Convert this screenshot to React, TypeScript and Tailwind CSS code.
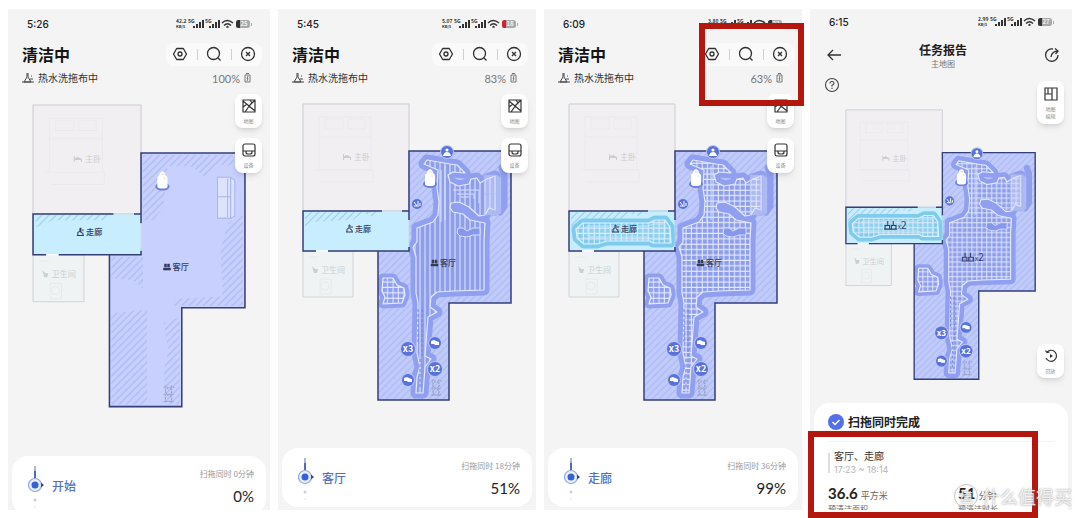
import { ReactNode } from 'react';
import clsx from 'clsx';

type Stage = 'start' | 'vacuum' | 'mop' | 'report';

const LIVING = 'M106 47H208V199H146V296H75V147H106Z';

const MAIN_AREA =
  'M114 124L130 118L135 111L136 98L134 84L135 66L121 60L124 56L147 60L154 61L162 69L150 68L145 71L147 78L155 82L166 80L168 75L174 74L177 79L184 75L192 72V106L186 104L182 111L176 112L166 103L156 98L148 99L147 104L150 108L160 110L167 116L182 119L181 136V186L150 187L134 188L128 193L127 203L134 208L125 213L122 252L128 255L122 263L120 289H113L114 273L117 263L114 249L115 199L113 189V153L110 143L114 138Z';

const SIDE_AREA = 'M80 174L90 174L94 181L101 184L102 191L99 199L80 200L82 193L79 187Z';

const HALL_AREA =
  'M7 125L14 119H80L86 116H96L101 123L102 139H84L81 137H38L28 140H15L8 134Z';

const START_HATCH = [
  'M108 49H197V60L180 58L168 70L155 60H132L128 100L118 113H108Z',
  'M206 108L192 115L184 140L186 188L140 190L134 197H206Z',
  'M77 149H108V180L98 172L77 170Z',
  'M77 204L112 201V294H77Z',
  'M144 208L128 214L133 240L128 262L132 294H144Z',
];

function Badge({ x, y, r = 6, children }: { x: number; y: number; r?: number; children?: ReactNode }) {
  return (
    <g transform={`translate(${x} ${y})`}>
      <circle r={r + 1} fill="#b9c4fa" />
      <circle r={r} fill="#5a73da" />
      {children}
    </g>
  );
}

function PassBadge({ x, y, count }: { x: number; y: number; count: number }) {
  return (
    <Badge x={x} y={y} r={7}>
      <text y="3" fontSize="9" fontWeight="700" fill="#fff" textAnchor="middle">
        x{count}
      </text>
    </Badge>
  );
}

function StainBadge({ x, y }: { x: number; y: number }) {
  return (
    <Badge x={x} y={y}>
      <path d="M-4 -2L-1 -3L1 -2L4 -1L4 2L0 2L-1 1L-4 1Z" fill="#fff" />
    </Badge>
  );
}

function MopCount({ x, y }: { x: number; y: number }) {
  return (
    <g transform={`translate(${x} ${y})`} stroke="#343c6c" fill="none">
      <path d="M3 -5V0M0 4V0H5V4ZM9 -5V0M7 4V0H12V4ZM-1 4H13" strokeWidth="1.2" />
      <text x="14" y="4" fontSize="11" fill="#343c6c" stroke="none">
        <tspan fontSize="7">x</tspan>2
      </text>
    </g>
  );
}

function FloorMap({ stage, className }: { stage: Stage; className: string }) {
  const cleaned = stage !== 'start';
  const mopped = stage === 'mop' || stage === 'report';
  const id = (name: string) => `${stage}-${name}`;
  const url = (name: string) => `url(#${stage}-${name})`;

  return (
    <svg viewBox="-1 -1 211 299" className={clsx('block shrink-0', className)} role="img">
      <defs>
        <pattern id={id('hatch')} width="5" height="5" patternUnits="userSpaceOnUse" patternTransform="rotate(45)">
          <path d="M2.5 0V5" stroke="#adb9f2" strokeWidth="1.2" />
        </pattern>
        <pattern id={id('hallhatch')} width="5" height="5" patternUnits="userSpaceOnUse" patternTransform="rotate(45)">
          <path d="M2.5 0V5" stroke="#a0cdea" strokeWidth="1.2" />
        </pattern>
        <pattern id={id('lines')} x="114" y="0" width="5" height="10" patternUnits="userSpaceOnUse">
          <path d="M3 0V10" stroke="#e3e8ff" strokeWidth="1" />
        </pattern>
        <pattern id={id('grid')} x="114" y="121" width="5.4" height="5.4" patternUnits="userSpaceOnUse">
          <path d="M3 0V6M0 3H6" stroke="#e6ebff" strokeWidth="1" fill="none" />
        </pattern>
        <clipPath id={id('room')}>
          <path d={LIVING} />
        </clipPath>
        <clipPath id={id('hall')}>
          <path d="M0 107H106V147H0Z" />
        </clipPath>
      </defs>

      {/* bedroom */}
      <path d="M0 0H106V107H0Z" fill="#f2eff3" stroke="#cbccd2" strokeWidth="1" />
      <g stroke="#ebe9ef" strokeWidth="1" fill="none">
        <path d="M16 13H68V66H16ZM16 33H68M22 15H40V25H22ZM45 15H62V25H45ZM12 66H70V78H18" />
      </g>
      <g fill="#cdccd2">
        <path d="M40 50H41V52L44 51L48 53V56H47V54H41V56H40Z" />
        <text x="51" y="56" fontSize="8">
          主卧
        </text>
      </g>

      {/* bathroom */}
      <path d="M0 147H50V193H0Z" fill="#eff3f4" stroke="#cfd3d6" strokeWidth="1" />
      <g stroke="#e6eaec" fill="none">
        <circle cx="22" cy="182" r="4" />
        <path d="M17 175H28V190H17ZM6 153H16" />
      </g>
      <g fill="#c8d0d2">
        <path d="M9 162L12 165H15L14 169H11Z" />
        <text x="18" y="169" fontSize="8">
          卫生间
        </text>
      </g>

      {/* living room */}
      <path d={LIVING} fill={cleaned ? '#c0cafb' : '#c8d1fe'} />
      {cleaned ? <path d={LIVING} fill={url('hatch')} /> : START_HATCH.map((d) => <path key={d} d={d} fill={url('hatch')} />)}

      {cleaned && (
        <g clipPath={url('room')} strokeLinejoin="round">
          <path d={MAIN_AREA} fill="none" stroke="#909fef" strokeWidth="11" />
          <path d="M199 64L201 70V102L197 108" fill="none" stroke="#909fef" strokeWidth="7" strokeLinecap="round" />
          <path d={SIDE_AREA} fill="#909fef" stroke="#909fef" strokeWidth="9" />
          <path d={MAIN_AREA} fill="#8f9eea" />
          <path d={MAIN_AREA} fill={mopped ? url('grid') : url('lines')} stroke="#e3e8ff" strokeWidth="1.2" />
          <path d={SIDE_AREA} fill={url('grid')} stroke="#e6ebff" strokeWidth="1.2" />
          <path
            d="M155 124H160L164 127L170 124H177V131H170L164 133L157 132L154 129Z"
            fill="#8797ec"
            stroke="#d5ddff"
            strokeWidth="1"
          />
          <path d="M138 66V118M142 62V116" stroke="#d9e0ff" strokeWidth="1" fill="none" />
          {!mopped && <path d="M150 86H176V99M154 90H171V95M158 93H166" stroke="#d9e0ff" strokeWidth="1" fill="none" />}
          <path d="M115 205V240M119 205V252M117 255V284" stroke="#7184d8" strokeWidth="1" strokeDasharray="3 2" />
        </g>
      )}

      {/* corridor */}
      <path d="M0 107H106V147H0Z" fill="#c8edfe" />
      {cleaned ? (
        <path d="M2 108H78L72 113L60 109L50 116H40L10 118L2 128Z" fill={url('hallhatch')} />
      ) : (
        <path d="M2 108H78L70 113H20L3 120Z" fill={url('hallhatch')} />
      )}
      {mopped && (
        <g clipPath={url('hall')} strokeLinejoin="round">
          <path d={HALL_AREA} fill="#8fd2ef" stroke="#80cbec" strokeWidth="9" />
          <path d={HALL_AREA} fill={url('grid')} stroke="#d6f4ff" strokeWidth="1.2" />
          <path d="M18 122H78L86 120H96V135H84L78 133H20Z" fill="none" stroke="#c2ecfb" strokeWidth="1" />
        </g>
      )}

      {/* walls with door gaps */}
      <g stroke="#343e78" strokeWidth="1.5" fill="none">
        <path d="M106 116V47H208V199H146V296H75V147" />
        <path d="M79 107H0V147H13M25 147H106V143M99 107H106" />
      </g>
      <path d="M79 107H99M106 116V143" stroke={mopped ? '#9fd8ee' : '#cdd9e4'} strokeWidth="1" />
      <path d="M13 147H25" stroke="#fff" strokeWidth="1.5" />

      {/* sofa */}
      <g stroke="#a9b5ec" strokeWidth="1" fill="#dde3fd" fillOpacity={cleaned ? 0.4 : 1} strokeOpacity={cleaned ? 0.5 : 1}>
        <path d="M181 71H194V111H181Z" />
        <path d="M194 71L198 74V109L194 111Z" />
        <path d="M181 90H194M191 72V110" />
      </g>

      {/* dock */}
      <ellipse cx="127" cy="80" rx="7" ry="4" fill="#6c80de" />
      <path d="M122 71Q123 70 124 69Q124 66 127 65Q130 66 130 69Q132 70 132 72V80Q132 82 127 82Q122 82 122 80Z" fill="#fff" />
      <path d="M126 68H129M129 71V73" stroke="#d5c7b0" strokeWidth="0.6" />

      {/* plant stand */}
      <g stroke="#8e97b8" strokeWidth="0.7" fill="none" strokeDasharray="2 1">
        <path d="M128 277H139M128 284H138M128 291H138M130 275V293M136 275V293" />
        <circle cx="133" cy="281" r="3" />
        <circle cx="133" cy="288" r="3" />
      </g>

      {cleaned && (
        <g>
          <Badge x={144} y={48}>
            <circle cy="-2" r="1.6" fill="#fff" />
            <path d="M-4 4Q-3 0 0 0Q3 0 4 4Z" fill="#fff" />
          </Badge>
          <Badge x={114} y={100} r={5}>
            <path d="M-3 -2L0 2M1 -3V1M-3 2H2M3 -1V2" stroke="#fff" strokeWidth="1" />
          </Badge>
          <PassBadge x={105} y={245} count={3} />
          <StainBadge x={132} y={239} />
          <PassBadge x={132} y={265} count={2} />
          <StainBadge x={105} y={276} />
        </g>
      )}

      {stage === 'report' ? (
        <>
          <MopCount x={43} y={127} />
          <MopCount x={128} y={162} />
        </>
      ) : (
        <g fill="#343c5c">
          <path
            d="M43 128H50M44 128V125L46 124V121M46 121H47V125L49 126V128M49 122V124"
            stroke="#343c5c"
            strokeWidth="1"
            fill="none"
          />
          <text x="52" y="128" fontSize="8" fontWeight="500">
            走廊
          </text>
          <path d="M128 160H135V162H128ZM129 156H131V159H129ZM132 156H134V159H132Z" stroke="#343c5c" strokeWidth="0.5" />
          <text x="137" y="162" fontSize="8" fontWeight="500">
            客厅
          </text>
        </g>
      )}
    </svg>
  );
}

function StatusIcons({ speed, battery, low }: { speed: string; battery: string; low?: boolean }) {
  return (
    <svg viewBox="0 0 76 12" className="h-3 w-[76px]" fill="#333">
      <text x="0" y="5" fontSize="5" fontWeight="700">
        {speed}
      </text>
      <text x="0" y="10" fontSize="4" fontWeight="700">
        KB/s
      </text>
      <text x="12" y="5" fontSize="5" fontWeight="700">
        5G
      </text>
      <path d="M17 8H19V10H17ZM20 6H22V10H20ZM23 4H25V10H23ZM26 2H28V10H26Z" />
      <text x="29" y="5" fontSize="5" fontWeight="700">
        5G
      </text>
      <path d="M33 8H35V10H33ZM36 6H38V10H36ZM39 4H41V10H39ZM42 2H44V10H42Z" />
      <g fill="none" stroke="#333" strokeWidth="1.4">
        <path d="M46 5Q51 0 57 5M48 7.5Q51.5 4 55 7.5M50.5 9.5L51.5 8.5L52.5 9.5" />
      </g>
      <rect x="60" y="2" width="14" height="8" rx="2.5" fill="#a9a9a9" />
      <path d="M64 2H62.5Q60 2 60 4.5V7.5Q60 10 62.5 10H64Z" fill={low ? '#d8202a' : '#333'} />
      <path d="M75 5H76V8H75Z" fill="#a9a9a9" />
      <text x="68" y="8" fontSize="6" fontWeight="700" fill="#f4f4f4" textAnchor="middle">
        {battery}
      </text>
    </svg>
  );
}

function ToolPill() {
  const button = 'flex size-4 items-center justify-center text-[#303030]';
  return (
    <div className="mr-2 flex h-[23px] w-24 items-center justify-between rounded-lg bg-[#fafafa] px-[6px]">
      <button aria-label="设置" className={button}>
        <svg viewBox="0 0 16 16" className="size-4" fill="none" stroke="currentColor" strokeWidth="1.3">
          <path d="M4.7 2.5H11.3L14.5 8L11.3 13.5H4.7L1.5 8Z" strokeLinejoin="round" />
          <circle cx="8" cy="8" r="2" />
        </svg>
      </button>
      <span className="h-[11px] w-px bg-[#cfcfcf]" />
      <button aria-label="搜索" className={button}>
        <svg viewBox="0 0 16 16" className="size-4" fill="none" stroke="currentColor" strokeWidth="1.3">
          <circle cx="7.5" cy="7.5" r="6" />
          <path d="M12 12L14.5 14.5" />
        </svg>
      </button>
      <span className="h-[11px] w-px bg-[#cfcfcf]" />
      <button aria-label="关闭" className={button}>
        <svg viewBox="0 0 16 16" className="size-4" fill="none" stroke="currentColor" strokeWidth="1.3">
          <circle cx="8" cy="8" r="6.5" />
          <path d="M6 6L10 10M10 6L6 10" />
        </svg>
      </button>
    </div>
  );
}

function SideButton({ label, className, children }: { label: ReactNode; className: string; children: ReactNode }) {
  return (
    <button
      className={clsx(
        'absolute right-2 flex w-[27px] flex-col items-center justify-center gap-1 rounded-lg bg-white text-[5px] leading-[7px] text-[#8a8a8a] shadow-md shadow-black/10',
        className,
      )}
    >
      <svg viewBox="0 0 14 14" className="size-[14px]" fill="none" stroke="#333" strokeWidth="1.2">
        {children}
      </svg>
      <span>{label}</span>
    </button>
  );
}

type PhoneProps = {
  stage: Stage;
  time: string;
  speed: string;
  phoneBattery: string;
  low?: boolean;
  robotBattery: string;
  room: string;
  minutes: number;
  percent: string;
  mapClass: string;
  cardClass: string;
};

function CleaningPhone({
  stage,
  time,
  speed,
  phoneBattery,
  low,
  robotBattery,
  room,
  minutes,
  percent,
  mapClass,
  cardClass,
}: PhoneProps) {
  return (
    <section className="relative flex h-full flex-col overflow-hidden bg-[#f4f4f4]">
      <div className="flex h-[30px] shrink-0 items-center justify-between pr-[18px] pl-[19px]">
        <span className="font-[Inter] text-[10px] font-medium">{time}</span>
        <StatusIcons speed={speed} battery={phoneBattery} low={low} />
      </div>
      <header className="flex h-[30px] shrink-0 items-center justify-between pl-[14px]">
        <h1 className="text-base leading-none font-semibold text-[#141414]">清洁中</h1>
        <ToolPill />
      </header>
      <div className="flex h-[18px] shrink-0 items-center pr-[19px] pl-[14px]">
        <svg viewBox="0 0 12 12" className="size-3" fill="none" stroke="#444" strokeWidth="1">
          <path d="M5 1V5L2 10H9L6 5V1M0 10H12M9 4H10M8 7H11" />
        </svg>
        <span className="ml-1 text-[10px] leading-none text-[#333]">热水洗拖布中</span>
        <span className="mr-1 ml-auto font-[Lato] text-[11px] leading-none text-[#777]">{robotBattery}</span>
        <svg viewBox="0 0 7 10" className="h-[10px] w-[7px]" fill="none" stroke="#777" strokeWidth="1">
          <path d="M1 2H6V9H1ZM2 0.5H5" />
          <path d="M4 3L3 5.5H4L3 8" />
        </svg>
      </div>

      <FloorMap stage={stage} className={mapClass} />

      <SideButton label="地图" className="top-[85px] h-[34px]">
        <path d="M1 1H13V13H1ZM1 2L13 12M13 1L8 6L3 13M1 8L5 5M8 1L10 4" />
      </SideButton>
      <SideButton label="设备" className="top-[129px] h-[35px]">
        <rect x="1" y="1" width="12" height="12" rx="2" />
        <path d="M1 8H13M4 8V9Q4 11 6 11H8Q10 11 10 9V8" />
      </SideButton>

      <div className={clsx('mx-1 mt-auto flex h-[59px] shrink-0 rounded-2xl bg-white pr-3 pl-4', cardClass)}>
        <svg viewBox="0 0 16 48" className="mt-[6px] h-12 w-4" fill="none">
          <path d="M7 4V16" stroke="#5268b8" strokeWidth="2" />
          <path d="M7 4V9" stroke="#aab6e2" strokeWidth="2" />
          <circle cx="7" cy="23" r="6.5" fill="#eaf0ff" stroke="#93a8e6" strokeWidth="1.2" />
          <circle cx="7" cy="23" r="3.5" fill="#3561d8" />
          <path d="M13 20.5L16 23L13 25.5Z" fill="#3a4a82" />
          <circle cx="7" cy="38" r="1.5" fill="#c9cfe0" />
          <circle cx="7" cy="45" r="1" fill="#e8ebf2" />
        </svg>
        <p className="ml-2 self-center text-xs font-medium text-[#5470c6]">{room}</p>
        <div className="ml-auto flex flex-col items-end pt-3">
          <span className="text-[8px] leading-[11px] text-[#999]">扫拖同时 {minutes}分钟</span>
          <span className="mt-[7px] font-[Lato] text-[15px] leading-5 text-[#222]">{percent}</span>
        </div>
      </div>
    </section>
  );
}

function Stat({ value, unit, label }: { value: string; unit: string; label: string }) {
  return (
    <div className="w-[130px] shrink-0">
      <p className="flex items-baseline gap-[3px] leading-4">
        <span className="font-[Lato] text-[15px] font-bold text-[#222]">{value}</span>
        <span className="text-[9px] text-[#666]">{unit}</span>
      </p>
      <p className="text-[8px] leading-[10px] text-[#666]">{label}</p>
    </div>
  );
}

function ReportPhone() {
  return (
    <section className="relative flex h-full flex-col overflow-hidden bg-[#f4f4f4]">
      <div className="flex h-[26px] shrink-0 items-center justify-between pr-[18px] pl-[19px]">
        <span className="font-[Inter] text-[10px] font-medium">6:15</span>
        <StatusIcons speed="2.99" battery="27" />
      </div>
      <header className="flex h-10 shrink-0 items-center justify-between pr-3 pl-[17px]">
        <button aria-label="返回">
          <svg viewBox="0 0 15 12" className="h-3 w-[15px]" fill="none" stroke="#333" strokeWidth="1.3">
            <path d="M14 6H1M6 1L1 6L6 11" />
          </svg>
        </button>
        <div className="text-center">
          <h1 className="text-xs leading-4 font-semibold text-[#1c1c1c]">任务报告</h1>
          <p className="text-[8px] leading-[11px] text-[#777]">主地图</p>
        </div>
        <button aria-label="分享">
          <svg viewBox="0 0 16 16" className="size-4" fill="none" stroke="#333" strokeWidth="1.3">
            <path d="M9 2A6.2 6.2 0 1 0 14 8" />
            <path d="M7 10Q8 4 14 4M11 1.5L14 4L11.5 7" />
          </svg>
        </button>
      </header>
      <div className="flex h-5 shrink-0 items-center pl-[14px]">
        <button aria-label="帮助">
          <svg viewBox="0 0 16 16" className="size-4" fill="none" stroke="#444" strokeWidth="1.1">
            <circle cx="8" cy="8" r="6.5" />
            <path d="M6 6.5Q6 4.5 8 4.5Q10 4.5 10 6.3Q10 7.5 8 8.3V9.5M8 10.8V12" />
          </svg>
        </button>
      </div>

      <FloorMap stage="report" className="mt-[14px] ml-[35px] w-[192px]" />

      <SideButton
        label={
          <>
            地图
            <br />
            编辑
          </>
        }
        className="top-[72px] h-[43px]"
      >
        <path d="M1 1H13V13H1ZM8 1V13M1 7H8M4 1V7" />
      </SideButton>
      <SideButton label="回放" className="top-[335px] h-[34px]">
        <path d="M3 3A5.5 5.5 0 1 1 2 9" />
        <path d="M1.5 1.5L3 3.5L5.5 3" />
        <path d="M6 5V9L9 7Z" fill="#333" stroke="none" />
      </SideButton>

      <div className="mx-1 mt-[22px] min-h-0 flex-1 overflow-hidden rounded-t-2xl bg-white px-[14px]">
        <div className="flex h-[39px] items-center gap-1 border-b border-[#f3f3f3]">
          <svg viewBox="0 0 16 16" className="size-4" fill="none">
            <circle cx="8" cy="8" r="8" fill="#5470e8" />
            <path d="M4.5 8L7 10.5L11.5 6" stroke="#fff" strokeWidth="1.5" />
          </svg>
          <h2 className="text-xs font-semibold text-[#222]">扫拖同时完成</h2>
        </div>
        <div className="mt-[7px] flex gap-1">
          <span className="my-1 w-[2px] bg-[#dedede]" />
          <div className="leading-[14px]">
            <p className="text-[10px] text-[#333]">客厅、走廊</p>
            <p className="font-[Inter] text-[9px] text-[#b5b5b5]">17:23 ~ 18:14</p>
          </div>
        </div>
        <div className="mt-2 flex">
          <Stat value="36.6" unit="平方米" label="预清洁面积" />
          <Stat value="51" unit="分钟" label="预清洁时长" />
        </div>
      </div>
    </section>
  );
}

export default function App() {
  return (
    <main className="relative grid h-screen grid-cols-[minmax(0,262fr)_minmax(0,258fr)_minmax(0,258fr)_minmax(0,262fr)] grid-rows-[minmax(0,1fr)] gap-2 overflow-hidden bg-white px-2 pt-[9px] pb-2 font-['Noto_Sans_CJK_SC',sans-serif] text-[#222]">
      <CleaningPhone
        stage="start"
        time="5:26"
        speed="42.2"
        phoneBattery="25"
        robotBattery="100%"
        room="开始"
        minutes={0}
        percent="0%"
        mapClass="mt-[17px] ml-6 w-[215px]"
        cardClass="-mb-[5px]"
      />
      <CleaningPhone
        stage="vacuum"
        time="5:45"
        speed="5.07"
        phoneBattery="18"
        low
        robotBattery="83%"
        room="客厅"
        minutes={18}
        percent="51%"
        mapClass="mt-4 ml-6 w-[211px]"
        cardClass="mb-[3px]"
      />
      <div className="relative">
        <CleaningPhone
          stage="mop"
          time="6:09"
          speed="3.80"
          phoneBattery="23"
          robotBattery="63%"
          room="走廊"
          minutes={36}
          percent="99%"
          mapClass="mt-4 ml-6 w-[211px]"
          cardClass="mb-[3px]"
        />
        <div className="absolute top-[14px] -right-[2px] h-[83px] w-[105px] border-6 border-[#b3170f]" />
      </div>
      <div className="relative">
        <ReportPhone />
        <div className="absolute top-[422px] -left-[2px] h-[87px] w-[230px] border-6 border-[#b3170f]" />
        <div className="absolute right-0 bottom-[2px] flex items-center gap-1 text-lg leading-none text-white/80 [text-shadow:0_0_2px_#888]">
          <span className="flex size-6 items-center justify-center rounded-full border border-[#c4c4c4] text-sm leading-none">
            值
          </span>
          什么值得买
        </div>
      </div>
    </main>
  );
}
